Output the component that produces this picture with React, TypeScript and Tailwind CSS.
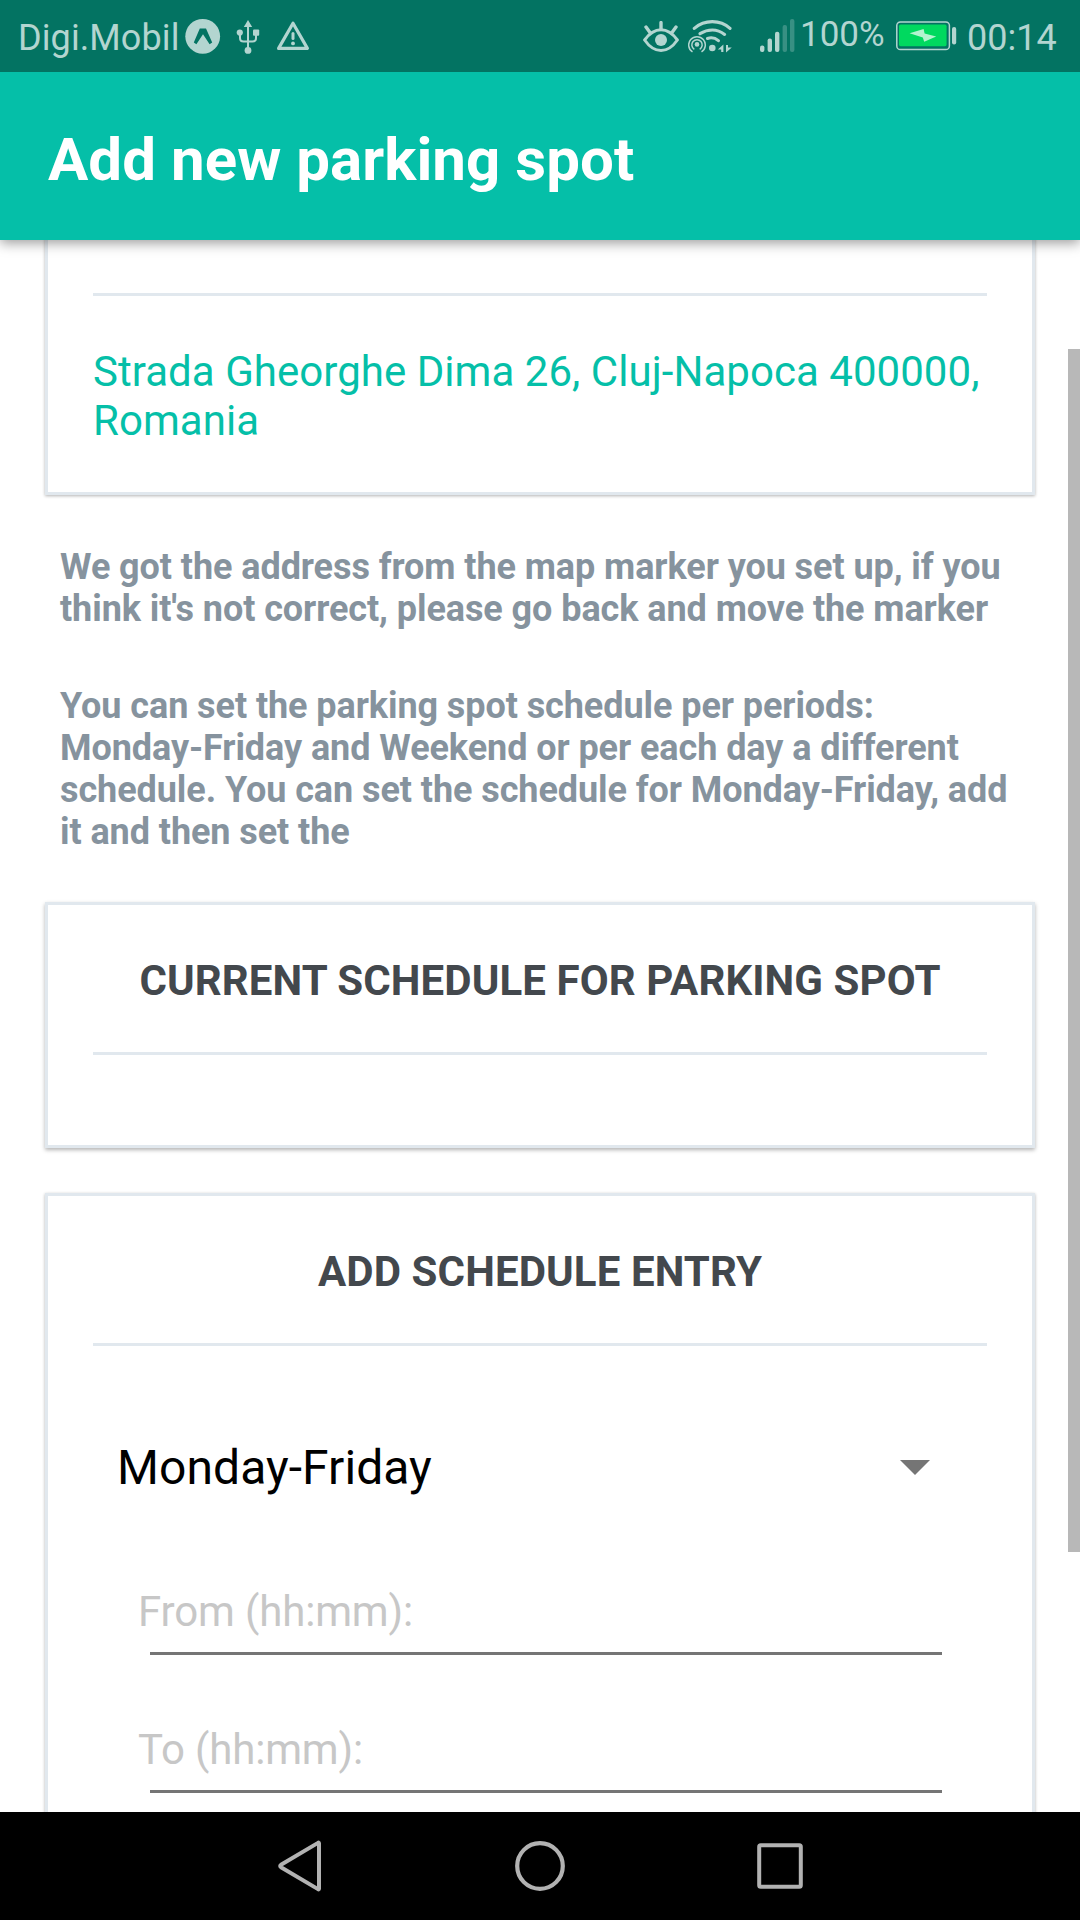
import type { ReactNode } from "react";

const TINT = "#b3d5d0";

function AppBadgeIcon() {
  return (
    <svg width="36" height="36" viewBox="0 0 36 36" className="block">
      <circle cx="17.7" cy="18.3" r="17.4" fill={TINT} />
      <path d="M14.8 10.4h6.2l6.2 14.2-2.6 1.7L18 16.2l-6.6 10.1L8.8 24.6z" fill="#037362" />
    </svg>
  );
}

function UsbIcon() {
  return (
    <svg width="24" height="34" viewBox="0 0 24 34" className="block">
      <path d="M12 0l4.2 7H7.8z" fill={TINT} />
      <path d="M12 5v23M4 11v7q0 3.5 3.5 3.5h9q3.5 0 3.5-3.5v-6" fill="none" stroke={TINT} strokeWidth="2" />
      <circle cx="3.8" cy="12.6" r="3.1" fill={TINT} />
      <rect x="17" y="9.6" width="6.2" height="6.2" rx="1" fill={TINT} />
      <circle cx="12" cy="30.4" r="3.4" fill={TINT} />
    </svg>
  );
}

function WarningIcon() {
  return (
    <svg width="34" height="30" viewBox="0 0 34 30" className="block">
      <path d="M17 2.2L31.4 27.4H2.6z" fill="none" stroke={TINT} strokeWidth="3.2" strokeLinejoin="round" />
      <path d="M17 12.5v5" stroke={TINT} strokeWidth="3" strokeLinecap="round" />
      <circle cx="17" cy="22.4" r="1.9" fill={TINT} />
    </svg>
  );
}

function EyeIcon() {
  return (
    <svg width="36" height="32" viewBox="0 0 36 32" className="block">
      <path d="M1.6 19Q9 8.8 18 8.8T34.4 19Q27 29.6 18 29.6T1.6 19z" fill="none" stroke={TINT} strokeWidth="3" strokeLinejoin="round" />
      <circle cx="18" cy="19" r="6" fill={TINT} />
      <path d="M18 1.6v7M3 6l4 5.4M33 6l-4 5.4" stroke={TINT} strokeWidth="3.4" strokeLinecap="round" />
    </svg>
  );
}

function WifiIcon() {
  return (
    <svg width="44" height="34" viewBox="0 0 44 34" className="block" fill="none" stroke={TINT}>
      <path d="M6.3 8.4Q14 1.7 24.3 1.7T42 8.4" strokeWidth="3.2" strokeLinecap="round" />
      <path d="M12 13.6Q18 10 24.4 10T36.6 14.4" strokeWidth="3.2" strokeLinecap="round" />
      <path d="M19.5 18.4Q25.5 16.4 30.4 20.6" strokeWidth="3.2" strokeLinecap="round" />
      <circle cx="24.3" cy="28" r="3.3" fill={TINT} stroke="none" />
      <circle cx="9" cy="24.4" r="2.3" fill={TINT} stroke="none" />
      <path d="M6.3 29.3a5.2 5.2 0 1 1 5.4 0" strokeWidth="1.5" />
      <path d="M4.5 31.9a8.3 8.3 0 1 1 9 0" strokeWidth="1.5" />
      <path d="M35.4 24.6V32h-2.2v-2.6h-3.4zM38 32.4V25h2v2.6h3.8z" fill={TINT} stroke="none" />
    </svg>
  );
}

function SignalIcon() {
  return (
    <svg width="35" height="34" viewBox="0 0 35 34" className="block" fill={TINT}>
      <rect x="0" y="26.6" width="4.4" height="6.4" rx="2" />
      <rect x="7.6" y="19.6" width="4.4" height="13.4" rx="2" />
      <rect x="15" y="12.8" width="4.4" height="20.2" rx="2" />
      <g opacity="0.3">
        <rect x="22.6" y="6" width="4.4" height="27" rx="2" />
        <rect x="30" y="0" width="4.4" height="33" rx="2" />
      </g>
    </svg>
  );
}

function BatteryIcon() {
  return (
    <svg width="61" height="30" viewBox="0 0 61 30" className="block">
      <rect x="0.8" y="1" width="52.6" height="27.6" rx="3.6" fill="none" stroke={TINT} strokeWidth="1.5" />
      <rect x="3" y="3.6" width="47.6" height="21.6" rx="1.6" fill="#00d95f" />
      <path d="M13.6 12.2L27.6 8l1 4.4L40.2 15.6 28.2 20.8l-1.4-4.2z" fill="#b3f4cf" />
      <rect x="56" y="6" width="4.2" height="17.4" rx="2" fill={TINT} />
    </svg>
  );
}

function StatusBar() {
  return (
    <header className="relative z-20 flex h-[72px] items-start bg-[#037362] text-[36px] leading-[42px] text-[#b3d5d0]">
      <span className="ml-[18px] mt-[17px] w-[166px] whitespace-nowrap tracking-[0.1px]">Digi.Mobil</span>
      <div className="ml-[1px] mt-[18px]"><AppBadgeIcon /></div>
      <div className="ml-[15px] mt-[20px]"><UsbIcon /></div>
      <div className="ml-[16px] mt-[21px]"><WarningIcon /></div>
      <div className="ml-auto mt-[21px]"><EyeIcon /></div>
      <div className="ml-[9px] mt-[20px]"><WifiIcon /></div>
      <div className="ml-[28px] mt-[19px]"><SignalIcon /></div>
      <span className="ml-[5px] mt-[14px] w-[96px] whitespace-nowrap text-[35px]">100%</span>
      <div className="mt-[21px]"><BatteryIcon /></div>
      <span className="ml-[10px] mr-[21px] mt-[17px] w-[92px] whitespace-nowrap">00:14</span>
    </header>
  );
}

function Divider() {
  return <div className="mx-[45px] h-[3px] bg-[#e1e8ee]" />;
}

function CardTitle({ children }: { children: ReactNode }) {
  return (
    <h2 className="pb-[47px] pt-[51px] text-center text-[42px] font-bold leading-[49px] tracking-[0.1px] text-[#43484d]">{children}</h2>
  );
}

function TimeField({ label }: { label: string }) {
  return (
    <div className="h-[138px] pl-[90px] pr-[90px]">
      <div className="h-[65px] text-[42px] leading-[49px] tracking-[-0.15px] text-[#c7c7c7]">{label}</div>
      <div className="ml-[12px] h-[3px] bg-[#757575]" />
    </div>
  );
}

const card = "mx-[45px] border-[3px] border-[#e1e8ee] bg-white";

export default function App() {
  return (
    <div className="flex h-[1920px] w-[1080px] flex-col overflow-hidden bg-white font-['Roboto',sans-serif]">
      <StatusBar />
      <div className="relative z-10 flex h-[168px] shrink-0 items-center bg-[#05bfa8] pl-[48px] pt-[7px] shadow-[0_3px_12px_rgba(0,0,0,0.4)]">
        <h1 className="whitespace-nowrap text-[60px] font-bold leading-[70px] tracking-[0.06px] text-white">Add new parking spot</h1>
      </div>

      <main className="relative h-[1572px] shrink-0 overflow-hidden">
        <section className={card + " -mt-[3px] h-[258px] pt-[53px] shadow-[0_1px_3px_rgba(0,0,0,0.3)]"}>
          <Divider />
          <p className="ml-[45px] mt-[51px] w-[900px] whitespace-nowrap text-[42px] leading-[49px] tracking-[0.04px] text-[#05bfa8]">
            Strada Gheorghe Dima 26, Cluj-Napoca 400000,<br />Romania
          </p>
        </section>

        <div className="ml-[60px] w-[960px] whitespace-nowrap pt-[51px] text-[36px] font-bold leading-[42px] tracking-[-0.075px] text-[#86939e]">
          <p>We got the address from the map marker you set up, if you<br />think it's not correct, please go back and move the marker</p>
          <p className="mt-[55px]">
            You can set the parking spot schedule per periods:<br />Monday-Friday and Weekend or per each day a different<br />
            schedule. You can set the schedule for Monday-Friday, add<br />it and then set the
          </p>
        </div>

        <section className={card + " mt-[49px] h-[246px] shadow-[0_2px_4px_rgba(0,0,0,0.3)]"}>
          <CardTitle>CURRENT SCHEDULE FOR PARKING SPOT</CardTitle>
          <Divider />
        </section>

        <section className={card + " mt-[45px] h-[700px] shadow-[0_1px_3px_rgba(0,0,0,0.3)]"}>
          <CardTitle>ADD SCHEDULE ENTRY</CardTitle>
          <Divider />
          <div className="mt-[93px] flex h-[56px] items-center justify-between pl-[69px] pr-[102px] text-[48px] leading-[56px] tracking-[0.07px] text-black">
            <span className="pt-[2px]">Monday-Friday</span>
            <svg width="30" height="15" viewBox="0 0 30 15"><path d="M0 0h30L15 15z" fill="#757575" /></svg>
          </div>
          <div className="mt-[92px]">
            <TimeField label="From (hh:mm):" />
            <TimeField label="To (hh:mm):" />
          </div>
        </section>

        <div className="absolute right-0 top-[109px] h-[1203px] w-[12px] bg-[#b8b8b8]" />
      </main>

      <nav className="flex h-[108px] shrink-0 items-center bg-black">
        <svg width="44" height="52" viewBox="0 0 44 52" className="ml-[278px]">
          <path d="M41 3.2v45.6q0 1-1 .3L3 27.2q-1.6-1.2 0-2.4L40 2.9q1-.7 1 .3z" fill="none" stroke="#b2b2b2" strokeWidth="4" strokeLinejoin="round" />
        </svg>
        <svg width="50" height="50" viewBox="0 0 50 50" className="ml-[193px]">
          <circle cx="25" cy="25" r="22.8" fill="none" stroke="#b2b2b2" strokeWidth="4.2" />
        </svg>
        <svg width="46" height="46" viewBox="0 0 46 46" className="ml-[192px]">
          <rect x="2.2" y="2.2" width="41.6" height="41.6" rx="1.5" fill="none" stroke="#b2b2b2" strokeWidth="4" />
        </svg>
      </nav>
    </div>
  );
}
